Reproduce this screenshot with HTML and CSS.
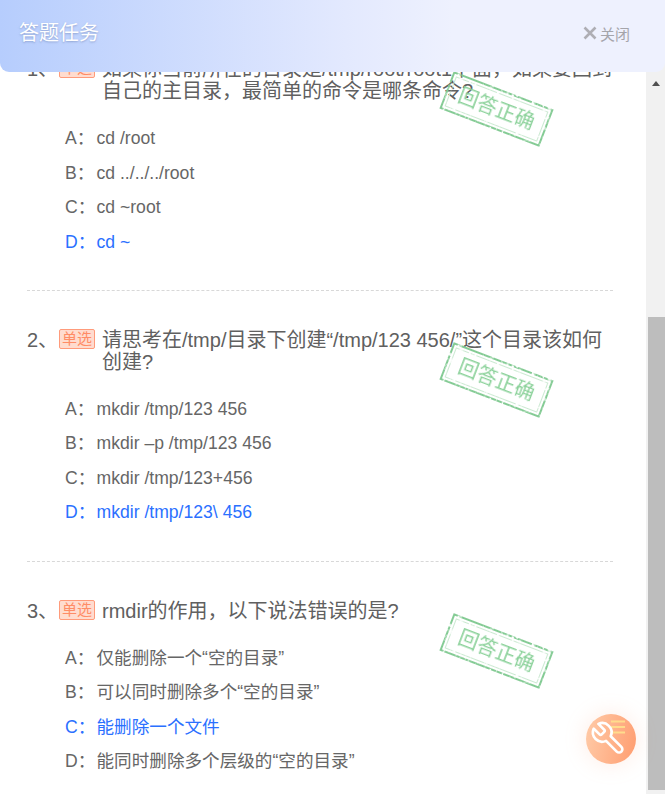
FILE: index.html
```html
<!DOCTYPE html>
<html lang="zh-CN">
	<head>
		<meta charset="utf-8">
		<title>答题任务</title>
		<link rel="stylesheet" href="styles.css">
	</head>
	<body>
		<svg class="defs" width="0" height="0">
			<filter id="rough" x="-5%" y="-5%" width="110%" height="110%">
				<feTurbulence type="fractalNoise" baseFrequency="0.3" numOctaves="2" seed="4" result="noise"/>
				<feColorMatrix in="noise" type="matrix" values="0 0 0 0 0  0 0 0 0 0  0 0 0 0 0  0 0 0 -6 4.3" result="mask"/>
				<feComposite in="SourceGraphic" in2="mask" operator="in"/>
				<feGaussianBlur stdDeviation="0.3"/>
			</filter>
		</svg>

		<div class="header">
			<div class="header-title">答题任务</div>
			<div class="header-close">
				<svg width="14" height="14" viewBox="0 0 14 14"><path d="M1.5 1.5l11 11M12.5 1.5l-11 11" stroke="#aeaeb4" stroke-width="2.6" fill="none"/></svg>
				<span>关闭</span>
			</div>
		</div>

		<div class="page">
			<div class="list">
				<div class="question">
					<div class="question-title">
						<span class="num">1、</span>
						<span class="tag">单选</span>
						<span class="question-text">如果你当前所在的目录是/tmp/root/root1下面，如果要回到自己的主目录，最简单的命令是哪条命令?</span>
					</div>
					<div class="options">
						<div class="option"><span class="letter">A：</span>cd /root</div>
						<div class="option"><span class="letter">B：</span>cd ../../../root</div>
						<div class="option"><span class="letter">C：</span>cd ~root</div>
						<div class="option correct"><span class="letter">D：</span>cd ~</div>
					</div>
					<div class="stamp"><div class="stamp-frame"></div><span class="stamp-text">回答正确</span></div>
				</div>

				<div class="question">
					<div class="question-title">
						<span class="num">2、</span>
						<span class="tag">单选</span>
						<span class="question-text">请思考在/tmp/目录下创建“/tmp/123 456/”这个目录该如何创建?</span>
					</div>
					<div class="options">
						<div class="option"><span class="letter">A：</span>mkdir /tmp/123 456</div>
						<div class="option"><span class="letter">B：</span>mkdir –p /tmp/123 456</div>
						<div class="option"><span class="letter">C：</span>mkdir /tmp/123+456</div>
						<div class="option correct"><span class="letter">D：</span>mkdir /tmp/123\ 456</div>
					</div>
					<div class="stamp"><div class="stamp-frame"></div><span class="stamp-text">回答正确</span></div>
				</div>

				<div class="question">
					<div class="question-title">
						<span class="num">3、</span>
						<span class="tag">单选</span>
						<span class="question-text">rmdir的作用，以下说法错误的是?</span>
					</div>
					<div class="options">
						<div class="option"><span class="letter">A：</span>仅能删除一个“空的目录”</div>
						<div class="option"><span class="letter">B：</span>可以同时删除多个“空的目录”</div>
						<div class="option correct"><span class="letter">C：</span>能删除一个文件</div>
						<div class="option"><span class="letter">D：</span>能同时删除多个层级的“空的目录”</div>
					</div>
					<div class="stamp"><div class="stamp-frame"></div><span class="stamp-text">回答正确</span></div>
				</div>
			</div>

			<div class="scrollbar">
				<div class="scrollbar-up"></div>
				<div class="scrollbar-thumb"></div>
			</div>
		</div>

		<div class="tool-btn">
			<svg width="50" height="50" viewBox="0 0 50 50">
				<path d="M25 7.5h14M25 13h14M25 18.500h14" stroke="#ffdc8c" stroke-width="1.800" fill="none"/>
				<path transform="translate(41 6) scale(-1.55 1.55)" d="M14.700 6.300a1 1 0 0 0 0 1.400l1.600 1.600a1 1 0 0 0 1.400 0l3.770-3.770a6 6 0 0 1-7.940 7.940l-6.910 6.910a2.120 2.120 0 0 1-3-3l6.910-6.910a6 6 0 0 1 7.940-7.940l-3.760 3.760z" fill="none" stroke="#fff" stroke-width="1.700" stroke-linejoin="round"/>
			</svg>
		</div>
	</body>
</html>
```

FILE: styles.css
```css
body {
	margin: 0;
	height: 794px;
	overflow: hidden;
	background-color: #fff;
	font-family: "Liberation Sans", "Noto Sans CJK SC", sans-serif;
	color: #666;
}

.defs {
	position: absolute;
}

.header {
	position: absolute;
	top: 0; left: 0; right: 0;
	z-index: 5;

	display: flex;
	align-items: center;
	justify-content: space-between;

	height: 72px;
	padding: 0 35px 10px 19px;
	box-sizing: border-box;

	background: linear-gradient(90deg, #b6cdfd 0%, #e3e9fe 52%, #eef1fe 68%);
	border-radius: 0 0 9px 9px;
}

.header-title {
	font-size: 20px;
	color: #fff;
	text-shadow: 0 1px 2px rgba(110, 130, 180, 0.6);
}

.header-close {
	display: flex;
	align-items: center;
	gap: 3px;
	margin-top: 4px;
	font-size: 15px;
	color: #a5a5ab;
}

.page {
	display: flex;
	height: 794px;
}

.list {
	flex: 1;
	padding: 58px 33px 0 27px;
	overflow: hidden;
}

.question {
	position: relative;
	padding-bottom: 31px;
	margin-bottom: 37.75px;
	border-bottom: 1px dashed #d8d8d8;
}

.question:last-child {
	border-bottom: none;
}

.question-title {
	display: flex;
	align-items: flex-start;
	font-size: 20px;
	line-height: 22px;
	color: #606060;
}

.num {
	flex: none;
	width: 32px;
}

.tag {
	flex: none;
	width: 36px;
	height: 20px;
	margin-right: 7px;
	box-sizing: border-box;

	font-size: 15px;
	line-height: 18px;
	text-align: center;

	color: #ff8c66;
	background-color: #ffdccf;
	border: 1px solid #ff9b7b;
	border-radius: 2px;
}

.question-text {
	flex: 1;
}

.options {
	margin-top: 19px;
	padding-left: 38px;
}

.option {
	height: 34.5px;
	font-size: 17.6px;
	line-height: 34.5px;
	color: #666;
}

.option.correct {
	color: #2b70ff;
}

.letter {
	display: inline-block;
	width: 31.5px;
}

.stamp {
	position: absolute;
	top: 31px;
	left: 416px;

	display: flex;
	align-items: center;
	justify-content: center;

	width: 107px;
	height: 40px;

	transform: rotate(21deg);
}

.stamp-frame {
	position: absolute;
	top: 0; left: 0; bottom: 0; right: 0;
	box-sizing: border-box;

	border: 2px solid #84cb94;
	outline: 1px solid #cbe9d1;
	outline-offset: -5px;

	filter: url(#rough);
}

.stamp-text {
	font-size: 20px;
	line-height: 1;
	color: #8ad199;
	filter: blur(0.3px);
}

.scrollbar {
	flex: none;
	width: 19px;
	padding-left: 2px;
	box-sizing: border-box;
	background-color: #f1f1f1;
}

.scrollbar-up {
	width: 0;
	height: 0;
	margin: 81px 0 0 4px;
	border-left: 4.500px solid transparent;
	border-right: 4.500px solid transparent;
	border-bottom: 5px solid #505050;
}

.scrollbar-thumb {
	height: 473px;
	margin-top: 231px;
	background-color: #bdbdbd;
}

.tool-btn {
	position: absolute;
	top: 714px;
	left: 586px;
	width: 50px;
	height: 50px;
	border-radius: 50%;
	background: linear-gradient(100deg, #ffcba8 0%, #ff9d70 100%);
	box-shadow: 0 0 22px rgba(255, 170, 130, 0.22);
}

.tool-btn svg {
	display: block;
}
```
